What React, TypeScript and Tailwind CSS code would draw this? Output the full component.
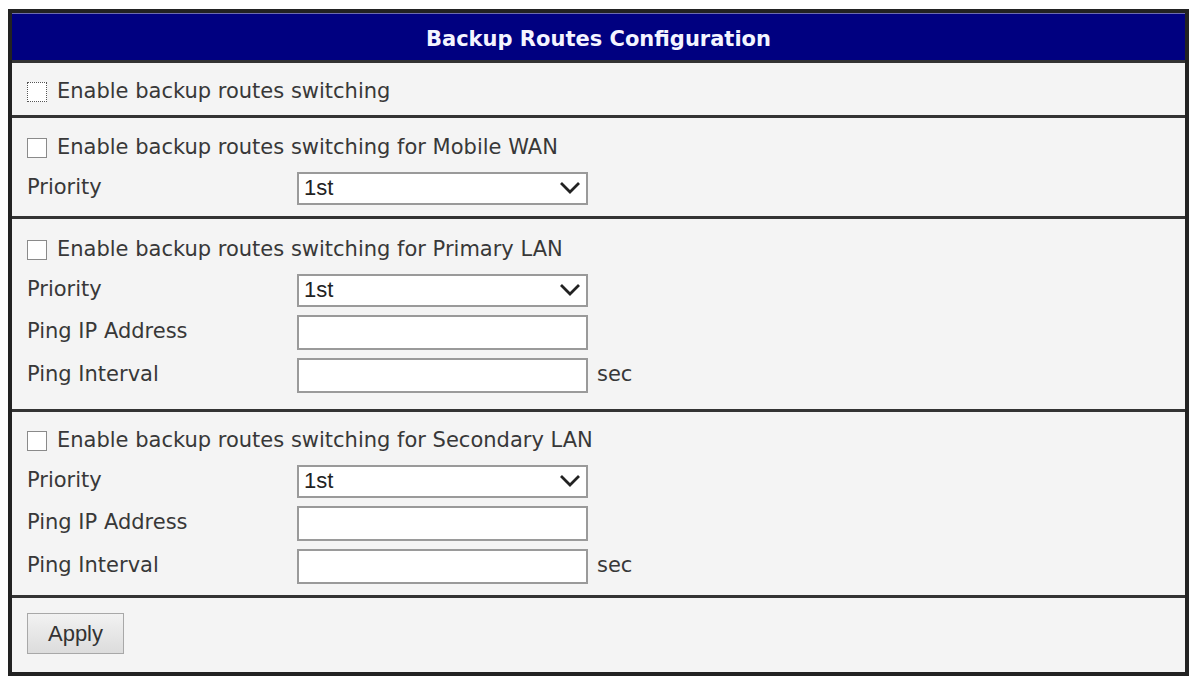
import React from "react";

const sans = "font-['DejaVu_Sans',Verdana,sans-serif]";
const arial = "font-['Liberation_Sans',Arial,sans-serif]";

function Checkbox({ focused = false }: { focused?: boolean }) {
  return (
    <span
      className={`inline-block w-[20px] h-[20px] bg-white shrink-0 ${
        focused ? "border border-dotted border-[#555]" : "border border-[#8a8a8a]"
      }`}
    />
  );
}

function CheckRow({ label, focused = false }: { label: string; focused?: boolean }) {
  return (
    <div className="flex items-center h-[38px] gap-[10px]">
      <Checkbox focused={focused} />
      <span>{label}</span>
    </div>
  );
}

function Select() {
  return (
    <div className="w-[291px] h-[33px] border-2 border-[#9a9a9a] bg-white flex items-center justify-between pl-[5px] pr-[5px]">
      <span className={`${arial} text-[22px] leading-none text-[#222]`}>1st</span>
      <svg width="22" height="14" viewBox="0 0 22 14">
        <polyline points="2,2 11,11 20,2" fill="none" stroke="#222" strokeWidth="2.8" />
      </svg>
    </div>
  );
}

function TextInput() {
  return <div className="w-[291px] h-[35px] border-2 border-[#9a9a9a] bg-white" />;
}

function FieldRow({ label, children, unit, tall = false }: { label: string; children: React.ReactNode; unit?: string; tall?: boolean }) {
  return (
    <div className={`flex items-center ${tall ? "h-[44px]" : "h-[42px]"}`}>
      <span className="w-[270px] shrink-0">{label}</span>
      {children}
      {unit && <span className="ml-[9px]">{unit}</span>}
    </div>
  );
}

export default function App() {
  return (
    <div className={`min-h-screen bg-white pt-[9px] pl-[8px] ${sans} text-[21px] text-[#383838]`}>
      <div className="w-[1181px] border-4 border-[#222] bg-[#f4f4f4]">
        <div className="h-[50px] pt-[6px] bg-[#000080] border-t border-[#6b6bb0] border-b-[3px] border-b-[#333] flex items-center justify-center">
          <span className="font-bold text-[#f4f4ff]">Backup Routes Configuration</span>
        </div>

        <div className="h-[55px] pt-[6px] px-[15px] flex items-center border-b-[3px] border-[#333]">
          <CheckRow label="Enable backup routes switching" focused />
        </div>

        <div className="px-[15px] pt-[11px] pb-[7px] border-b-[3px] border-[#333]">
          <CheckRow label="Enable backup routes switching for Mobile WAN" />
          <FieldRow label="Priority">
            <Select />
          </FieldRow>
        </div>

        <div className="px-[15px] pt-[12px] pb-[12px] border-b-[3px] border-[#333]">
          <CheckRow label="Enable backup routes switching for Primary LAN" />
          <FieldRow label="Priority">
            <Select />
          </FieldRow>
          <FieldRow label="Ping IP Address">
            <TextInput />
          </FieldRow>
          <FieldRow label="Ping Interval" unit="sec" tall>
            <TextInput />
          </FieldRow>
        </div>

        <div className="px-[15px] pt-[10px] pb-[7px] border-b-[3px] border-[#333]">
          <CheckRow label="Enable backup routes switching for Secondary LAN" />
          <FieldRow label="Priority">
            <Select />
          </FieldRow>
          <FieldRow label="Ping IP Address">
            <TextInput />
          </FieldRow>
          <FieldRow label="Ping Interval" unit="sec" tall>
            <TextInput />
          </FieldRow>
        </div>

        <div className="h-[74px] pb-[3px] px-[15px] flex items-center">
          <button
            className={`${arial} w-[97px] h-[41px] text-[22px] text-[#333] border border-[#a8a8a8] bg-gradient-to-b from-[#f2f2f2] to-[#dcdcdc]`}
          >
            Apply
          </button>
        </div>
      </div>
    </div>
  );
}
